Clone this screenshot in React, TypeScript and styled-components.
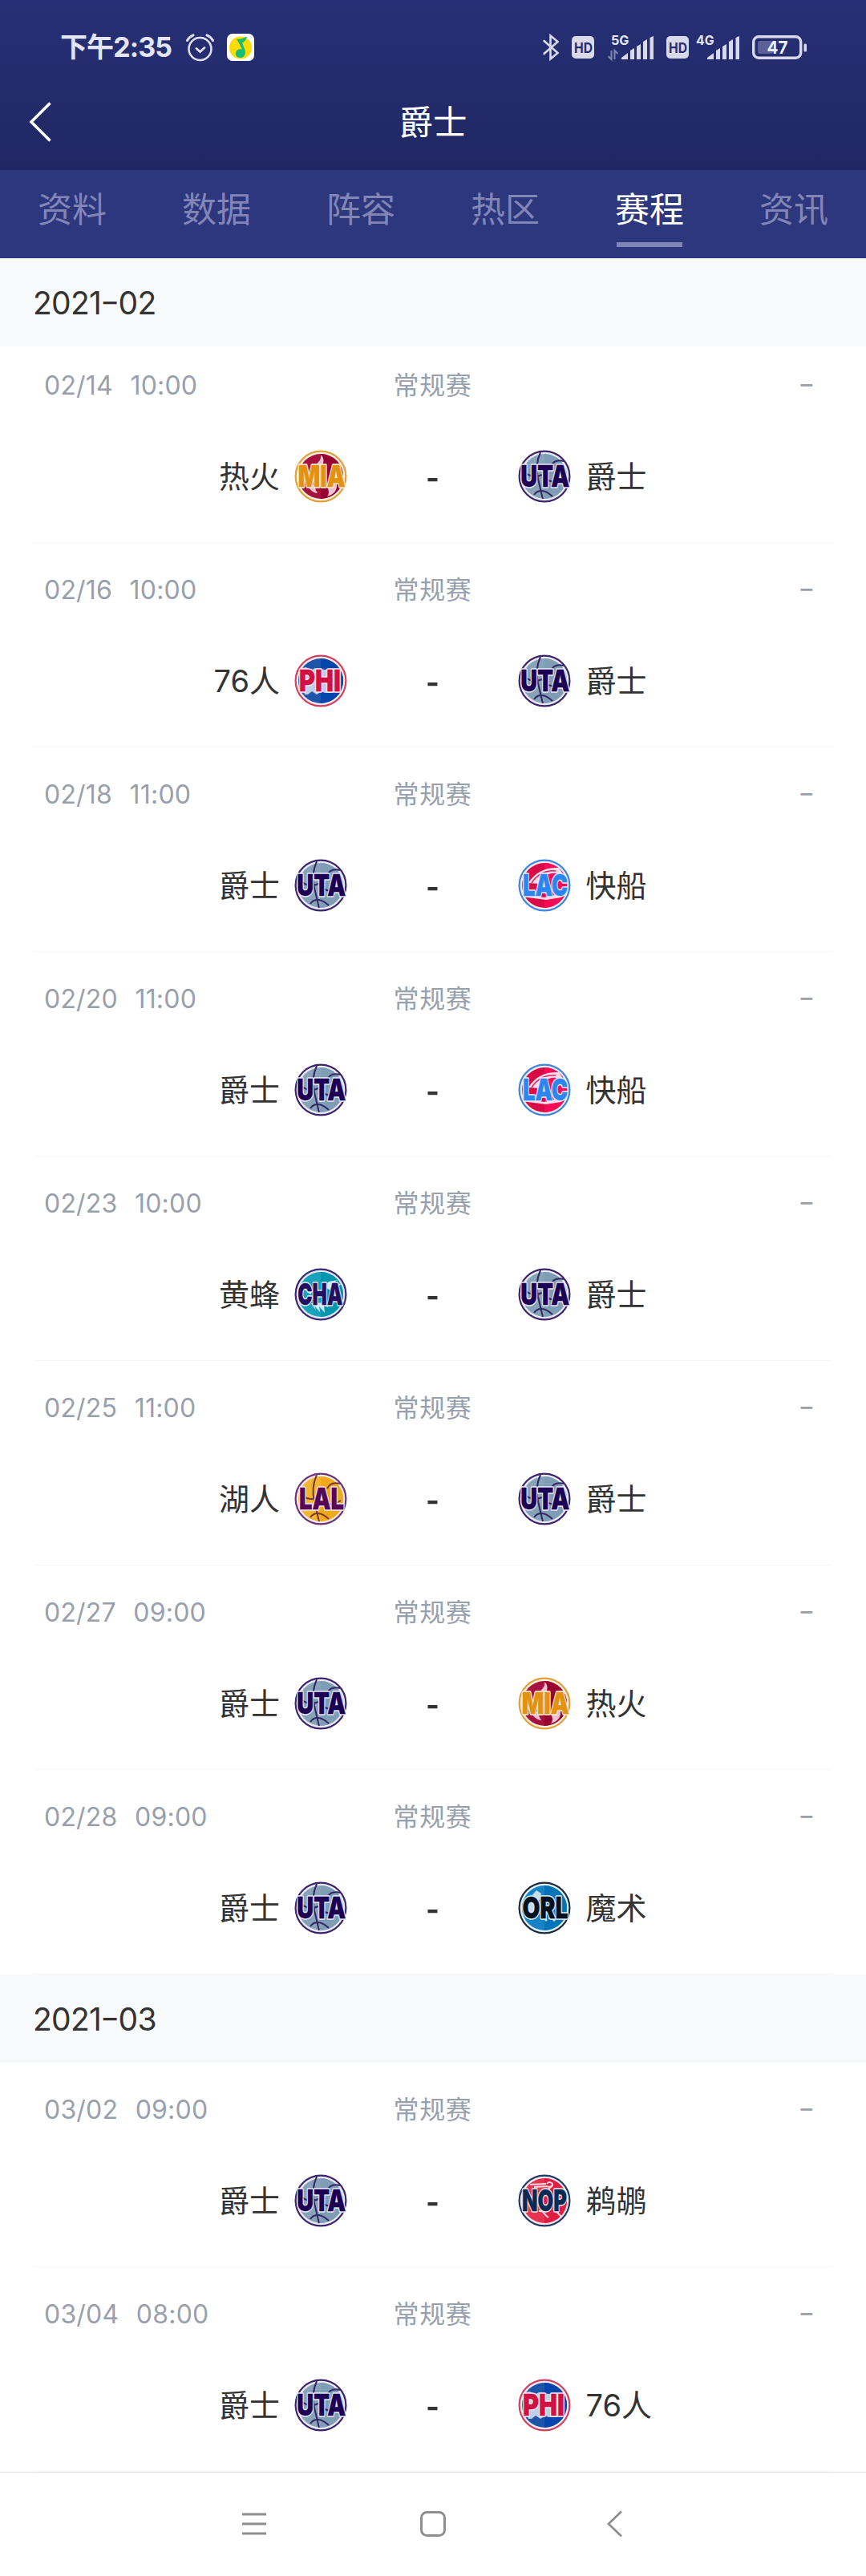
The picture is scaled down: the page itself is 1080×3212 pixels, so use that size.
import React from 'react';
import styled, { createGlobalStyle, css } from 'styled-components';

const GlobalStyle = createGlobalStyle`
  * { box-sizing: border-box; }
  body {
    margin: 0;
    background: #fff;
    font-family: Inter, 'Noto Sans CJK SC', sans-serif;
    color: #333;
  }
`;

const Screen = styled.div`
  width: 1080px;
  height: 3212px;
  display: flex;
  flex-direction: column;
  overflow: hidden;
  background: #fff;
`;

const Header = styled.header`
  height: 212px;
  flex: none;
  background: linear-gradient(#273076, #202763);
  color: #fff;
`;

const StatusBar = styled.div`
  height: 96px;
  padding: 23px 74px 0 75px;
  display: flex;
  justify-content: space-between;
  align-items: flex-start;
  color: #e3e5f3;
`;

const StatusSide = styled.div`
  display: flex;
  align-items: center;
  height: 72px;
`;

const Clock = styled.span`
  font-size: 34px;
  line-height: 74px;
  font-weight: 700;
  letter-spacing: -0.9px;
  width: 157px;
  white-space: nowrap;
`;

const Glyph = styled.svg<{ $left?: number }>`
  display: block;
  flex: none;
  margin-left: ${(p) => p.$left ?? 0}px;
  overflow: visible;
`;

const TitleBar = styled.div`
  height: 114px;
  display: grid;
  grid-template-columns: 100px 1fr 100px;
  align-items: center;
`;

const BackButton = styled.button`
  border: 0;
  background: none;
  padding: 0 0 2px 36px;
  height: 100%;
  display: flex;
  align-items: center;
`;

const Title = styled.h1`
  margin: 0;
  text-align: center;
  font-size: 42.5px;
  line-height: 60px;
  font-weight: 400;
`;

const Tabs = styled.nav`
  height: 110px;
  flex: none;
  display: grid;
  grid-template-columns: repeat(6, 1fr);
  background: #2d377d;
  position: relative;
  z-index: 1;
`;

const Tab = styled.a<{ $active?: boolean }>`
  display: flex;
  flex-direction: column;
  align-items: center;
  padding-top: 19px;
  font-size: 43px;
  line-height: 60px;
  color: ${(p) => (p.$active ? '#fff' : '#8286b6')};
  ${(p) =>
    p.$active &&
    css`
      &::after {
        content: '';
        width: 82px;
        height: 6px;
        margin-top: 11px;
        background: #8286b6;
      }
    `}
`;

const Month = styled.h2`
  margin: 0;
  height: 110px;
  flex: none;
  padding: 1px 0 0 41px;
  display: flex;
  align-items: center;
  background: #f8f9fb;
  font-size: 39px;
  font-weight: 400;
  letter-spacing: -0.7px;
  position: relative;
  z-index: 1;
`;

const Dash = styled.span<{ $gap?: number }>`
  display: inline-block;
  margin: 0 ${(p) => p.$gap ?? 0}px;
  transform: translateY(-2px) scaleX(1.35);
`;

const GameList = styled.div<{ $scrolled?: number }>`
  margin-top: -${(p) => p.$scrolled ?? 0}px;
  padding: 0 42px;
  flex: none;
`;

const GameRow = styled.article`
  height: 255px;
  padding-top: 29px;
  border-bottom: 1px solid #f6f6f7;
`;

const Meta = styled.div`
  height: 60px;
  padding: 0 24px 0 13px;
  display: grid;
  grid-template-columns: 1fr 120px 1fr;
  align-items: center;
  color: #989fad;
  font-size: 32px;
  line-height: 60px;
`;

const When = styled.span`
  display: flex;
  gap: 21.5px;
  letter-spacing: 0.2px;
`;

const Kind = styled.span`
  text-align: center;
  white-space: nowrap;
  margin-left: 10px;
  letter-spacing: 0.7px;
`;

const Result = styled.span`
  text-align: right;
  font-size: 34px;
`;

const Match = styled.div`
  height: 66px;
  margin-top: 50px;
  display: grid;
  grid-template-columns: 391px 213px 1fr;
  align-items: center;
`;

const Side = styled.div<{ $home?: boolean }>`
  display: flex;
  flex-direction: ${(p) => (p.$home ? 'row' : 'row-reverse')};
  justify-content: flex-end;
  align-items: center;
  gap: ${(p) => (p.$home ? 18 : 18.5)}px;
`;

const TeamName = styled.span`
  font-size: 38px;
  line-height: 60px;
`;

const Score = styled.span`
  text-align: center;
  font-size: 36px;
  font-weight: 700;
  line-height: 60px;
  padding-top: 4px;
`;

const NavBar = styled.footer`
  flex: none;
  height: 130px;
  border-top: 1px solid #e2e2e2;
  padding: 0 0 2px 301px;
  display: flex;
  align-items: center;
  background: #fff;
`;

type Code = 'MIA' | 'UTA' | 'PHI' | 'LAC' | 'CHA' | 'LAL' | 'ORL' | 'NOP';

interface Team {
  name: string;
  ring: string;
  gap: string;
  disc: string;
  shade: string;
  text: string;
  x: number;
  w: number;
}

const teams: Record<Code, Team> = {
  MIA: { name: '热火', ring: '#e0a03a', gap: '#fbeedd', disc: '#a5123f', shade: '#97002f', text: '#e3920f', x: 4.7, w: 59 },
  UTA: { name: '爵士', ring: '#3b2468', gap: '#e8e9f4', disc: '#87a3b8', shade: '#7f9db5', text: '#1c0054', x: 3.3, w: 61 },
  PHI: { name: '76人', ring: '#d2405f', gap: '#f6e9f2', disc: '#1d55aa', shade: '#0646ac', text: '#d11141', x: 6, w: 52 },
  LAC: { name: '快船', ring: '#3c86dc', gap: '#f0e8f5', disc: '#d90a45', shade: '#fb0a56', text: '#2a87f2', x: 6, w: 56 },
  CHA: { name: '黄蜂', ring: '#3a2870', gap: '#dfe6f2', disc: '#18a3ba', shade: '#0295ae', text: '#21105f', x: 4.3, w: 56 },
  LAL: { name: '湖人', ring: '#6a3478', gap: '#f7e6e6', disc: '#f1b52f', shade: '#efa91a', text: '#570657', x: 6, w: 56 },
  ORL: { name: '魔术', ring: '#1d2a38', gap: '#e0eef8', disc: '#1583c5', shade: '#0474b9', text: '#06121f', x: 5.5, w: 57 },
  NOP: { name: '鹈鹕', ring: '#1f3a63', gap: '#f8e6ec', disc: '#e5344f', shade: '#e01c43', text: '#0a2a56', x: 5, w: 56 },
};

function BallSeams({ color }: { color: string }) {
  return (
    <g fill="none" stroke={color} strokeWidth="2">
      <path d="M28 3C24 12 22 24 25 36S29 54 31 61" />
      <path d="M41 20C44 14 50 12 57 14" />
      <path d="M20 56C25 49 33 49 43 58" />
      <path d="M8 27C14 34 24 34 30 31M38 38C44 41 50 40 58 35" />
    </g>
  );
}

function Art({ code }: { code: Code }) {
  switch (code) {
    case 'UTA':
      return <BallSeams color="#322764" />;
    case 'LAL':
      return <BallSeams color="#7b3733" />;
    case 'MIA':
      return (
        <g fill="#edc3d2">
          <path d="M33 6C39 11 37 19 30 25L24 24C24 18 35 15 33 6Z" />
          <path d="M12 45C19 45 21 54 29 54C28 51 25 50 27 46L22 42Z" />
          <path d="M53 43C54 50 49 56 41 58C46 52 39 48 44 43Z" />
        </g>
      );
    case 'PHI':
      return (
        <g fill="#bfcee9">
          <path d="M9 17L15 16L20 20L26 17L38 19L50 17L57 24V43L49 48H38L34 46L28 50L22 46L17 50H13L7 34Z" />
        </g>
      );
    case 'LAC':
      return (
        <g fill="#f7dce9">
          <path d="M13 30C22 15 36 10 51 11L57 20C42 14 30 20 27 31Z" />
          <path d="M9 45L33 48L57 42L54 48L35 51L12 48Z" />
          <path d="M17 30C25 18 35 14 47 15" stroke="#da245e" strokeWidth="1.5" fill="none" />
        </g>
      );
    case 'CHA':
      return (
        <g fill="#cfeaf2">
          <path d="M37 23L43 17L54 15L49 18L58 20L54 25L43 27Z" />
          <path d="M13 27L20 25L23 29L20 33Z" />
          <path d="M21 44L27 53L25 47L32 55L31 48L38 56L37 47L42 49L44 43Z" />
        </g>
      );
    case 'ORL':
      return (
        <g fill="#c3def0">
          <path d="M16 19L23 11L29 15L27 23L20 26Z" />
          <path d="M12 24L22 24V38L17 41L12 36ZM28 25L36 21V40L29 45Z" />
          <circle cx="35" cy="48" r="1.6" />
          <circle cx="45" cy="48" r="1.8" />
          <circle cx="39" cy="46" r="1.2" />
        </g>
      );
    case 'NOP':
      return (
        <g fill="none" stroke="#fad8df" strokeWidth="2">
          <path d="M15 13L35 12M20 16L36 15C39 17 44 15 43 12C42 10 38 9 36 12" />
          <path d="M37 20C38 16 43 18 43 12" />
          <path d="M26 46C33 45 32 51 38 54M44 43C50 50 52 49 54 54" />
        </g>
      );
  }
}

const LogoText = styled.text`
  font-family: Inter, 'Liberation Sans', sans-serif;
  font-weight: 900;
  font-size: 37.5px;
`;

function TeamLogo({ code }: { code: Code }) {
  const t = teams[code];
  const place = {
    x: t.x,
    y: 45.5,
    textLength: t.w,
    lengthAdjust: 'spacingAndGlyphs' as const,
    fill: t.text,
  };
  return (
    <Glyph width="66" height="66" viewBox="0 0 66 66">
      <circle cx="33" cy="33" r="31.4" fill={t.gap} stroke={t.ring} strokeWidth="2.2" />
      <circle cx="33" cy="33" r="28" fill={t.disc} />
      <path d="M33 5A28 28 0 0 1 33 61Z" fill={t.shade} />
      <Art code={code} />
      <LogoText {...place} stroke={t.gap} strokeWidth="3.4" strokeLinejoin="round" aria-hidden="true">
        {code}
      </LogoText>
      <LogoText {...place} stroke={t.text} strokeWidth="0.4">
        {code}
      </LogoText>
    </Glyph>
  );
}

interface Game {
  date: string;
  time: string;
  home: Code;
  away: Code;
}

const february: Game[] = [
  { date: '02/14', time: '10:00', home: 'MIA', away: 'UTA' },
  { date: '02/16', time: '10:00', home: 'PHI', away: 'UTA' },
  { date: '02/18', time: '11:00', home: 'UTA', away: 'LAC' },
  { date: '02/20', time: '11:00', home: 'UTA', away: 'LAC' },
  { date: '02/23', time: '10:00', home: 'CHA', away: 'UTA' },
  { date: '02/25', time: '11:00', home: 'LAL', away: 'UTA' },
  { date: '02/27', time: '09:00', home: 'UTA', away: 'MIA' },
  { date: '02/28', time: '09:00', home: 'UTA', away: 'ORL' },
];

const march: Game[] = [
  { date: '03/02', time: '09:00', home: 'UTA', away: 'NOP' },
  { date: '03/04', time: '08:00', home: 'UTA', away: 'PHI' },
];

function GameItem({ game }: { game: Game }) {
  return (
    <GameRow>
      <Meta>
        <When>
          <span>{game.date}</span>
          <span>{game.time}</span>
        </When>
        <Kind>常规赛</Kind>
        <Result>
          <Dash>-</Dash>
        </Result>
      </Meta>
      <Match>
        <Side $home>
          <TeamName>{teams[game.home].name}</TeamName>
          <TeamLogo code={game.home} />
        </Side>
        <Score>-</Score>
        <Side>
          <TeamName>{teams[game.away].name}</TeamName>
          <TeamLogo code={game.away} />
        </Side>
      </Match>
    </GameRow>
  );
}

function MonthHeading({ year, month }: { year: string; month: string }) {
  return (
    <Month>
      <span>
        {year}
        <Dash $gap={2}>-</Dash>
        {month}
      </span>
    </Month>
  );
}

function HdBadge({ left }: { left: number }) {
  return (
    <Glyph $left={left} width="28" height="28" viewBox="0 0 28 28">
      <rect width="28" height="28" rx="5" fill="#d8daea" />
      <text x="3" y="21" fontSize="18" fontWeight="700" textLength="23" lengthAdjust="spacingAndGlyphs" fill="#252e72">
        HD
      </text>
    </Glyph>
  );
}

function Signal({ left, label, busy }: { left: number; label: string; busy?: boolean }) {
  const shift = busy ? 17 : 14;
  return (
    <Glyph $left={left} width={shift + 40} height="32" viewBox={`0 0 ${shift + 40} 32`}>
      <text x={busy ? 4 : 0} y="12.5" fontSize="16.5" fontWeight="700" textLength="22.5" lengthAdjust="spacingAndGlyphs" fill="#e3e5f3">
        {label}
      </text>
      {busy && (
        <path d="M4.5 20V31L0.5 27M8.5 31V20L12.5 24" fill="none" stroke="#8086b2" strokeWidth="2" />
      )}
      <g fill="#d8daea" transform={`translate(${shift} 0)`}>
        <path d="M0 31V29L8 23V31Z" />
        <path d="M11 31V20L16 17V31Z" />
        <path d="M19 31V15L24 12V31Z" />
        <path d="M27 31V9L32 6V31Z" />
        <path d="M35.5 31V4L40 2V31Z" />
      </g>
    </Glyph>
  );
}

export default function App() {
  const tabs = ['资料', '数据', '阵容', '热区', '赛程', '资讯'];
  return (
    <Screen>
      <GlobalStyle />
      <Header>
        <StatusBar>
          <StatusSide>
            <Clock>下午2:35</Clock>
            <Glyph width="35" height="34" viewBox="0 0 35 34" fill="none" stroke="#dcdeed" strokeWidth="2.6" strokeLinecap="round">
              <circle cx="17.5" cy="19" r="14" />
              <path d="M13 18.5L17.5 22.5L23 17.5" strokeWidth="2.8" />
              <path d="M1.5 8.5Q4 4 9 1.8M33.5 8.5Q31 4 26 1.8" strokeWidth="3" />
            </Glyph>
            <Glyph $left={16} width="34" height="34" viewBox="0 0 34 34">
              <rect width="34" height="34" rx="7" fill="#fff" />
              <circle cx="17" cy="17.5" r="14" fill="#ffdc00" />
              <path d="M12 7C17 7 20 6 25 3.5C24 7 23 9.5 19 11.5L22.5 20C24 25 21.5 30 17 30C12.5 30 10.5 27 11 24C11.5 20 15 18.5 19 19.5L14 10Z" fill="#15bd7a" />
            </Glyph>
          </StatusSide>
          <StatusSide>
            <Glyph width="21" height="34" viewBox="0 0 21 34" fill="none" stroke="#d8daea" strokeWidth="2.6">
              <path d="M1.5 9L18.5 24L9.5 31.5V2.5L18.5 10L1.5 25" strokeLinecap="round" />
            </Glyph>
            <HdBadge left={15} />
            <Signal left={17} label="5G" busy />
            <HdBadge left={16} />
            <Signal left={9} label="4G" />
            <Glyph $left={16} width="68" height="30" viewBox="0 0 68 30">
              <rect x="1.7" y="1.7" width="59" height="26.6" rx="6.5" fill="none" stroke="#d8daea" strokeWidth="3.4" />
              <rect x="7" y="7" width="19" height="16" rx="3" fill="#5b6196" />
              <rect x="64.5" y="10.5" width="3.5" height="10" rx="1.5" fill="#d8daea" />
              <text x="18.5" y="23" fontSize="22" fontWeight="700" textLength="26" lengthAdjust="spacingAndGlyphs" fill="#eceefa">
                47
              </text>
            </Glyph>
          </StatusSide>
        </StatusBar>
        <TitleBar>
          <BackButton aria-label="back">
            <Glyph width="28" height="50" viewBox="0 0 28 50" fill="none" stroke="#fff" strokeWidth="3.6">
              <path d="M26.5 1.5L3 25L26.5 48.5" />
            </Glyph>
          </BackButton>
          <Title>爵士</Title>
        </TitleBar>
      </Header>
      <Tabs>
        {tabs.map((t) => (
          <Tab key={t} $active={t === '赛程'}>
            {t}
          </Tab>
        ))}
      </Tabs>
      <MonthHeading year="2021" month="02" />
      <GameList $scrolled={10}>
        {february.map((g) => (
          <GameItem key={g.date} game={g} />
        ))}
      </GameList>
      <MonthHeading year="2021" month="03" />
      <GameList>
        {march.map((g) => (
          <GameItem key={g.date} game={g} />
        ))}
      </GameList>
      <NavBar>
        <Glyph width="32" height="34" viewBox="0 0 32 34" stroke="#8e8e8e" strokeWidth="3">
          <path d="M1 5H31M1 17H31M1 29H31" />
        </Glyph>
        <Glyph $left={190} width="34" height="34" viewBox="0 0 34 34" fill="none" stroke="#8e8e8e" strokeWidth="3">
          <rect x="2.5" y="2.5" width="29" height="29" rx="7" />
        </Glyph>
        <Glyph $left={200} width="22" height="34" viewBox="0 0 22 34" fill="none" stroke="#8e8e8e" strokeWidth="2.8">
          <path d="M18 1.5L2 17L18 32.5" />
        </Glyph>
      </NavBar>
    </Screen>
  );
}
